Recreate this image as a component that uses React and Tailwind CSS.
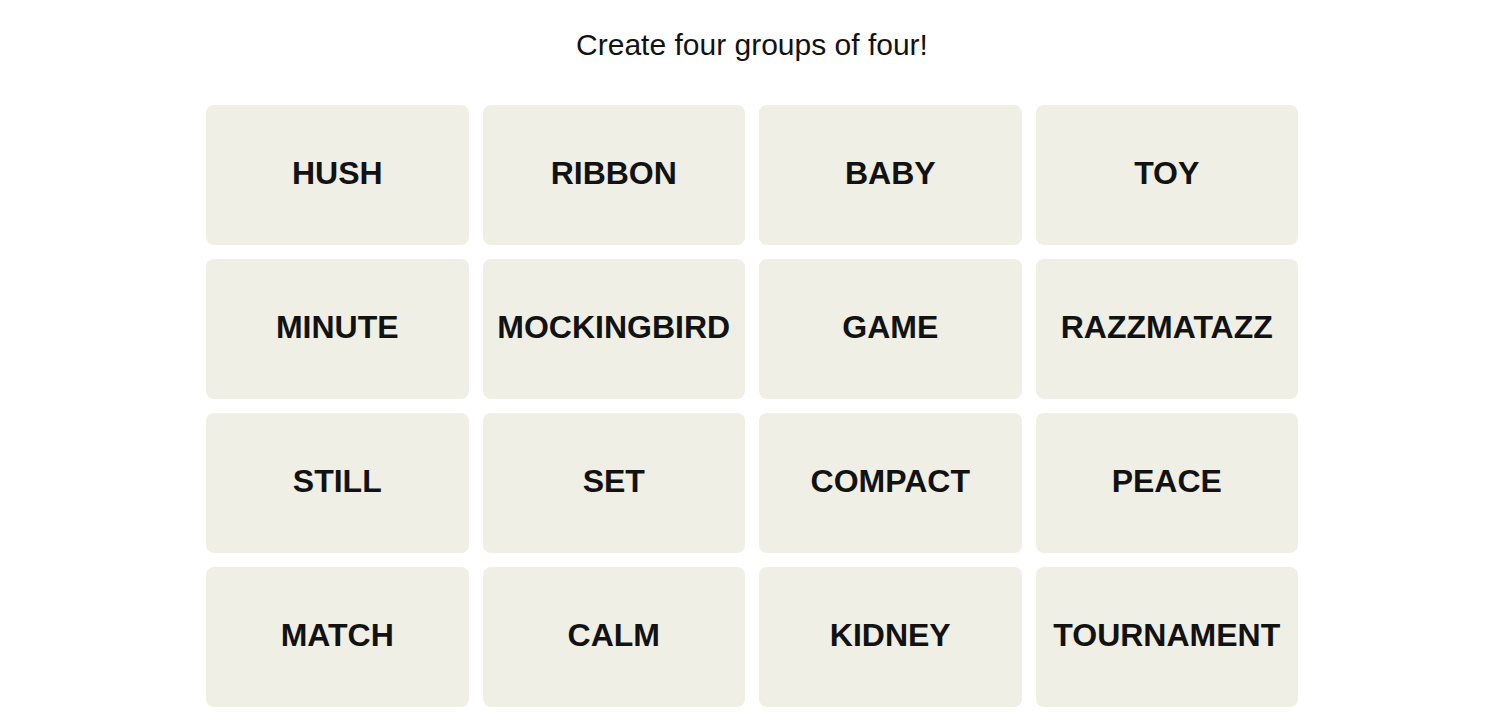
export default function App() {
  const words = [
    "HUSH", "RIBBON", "BABY", "TOY",
    "MINUTE", "MOCKINGBIRD", "GAME", "RAZZMATAZZ",
    "STILL", "SET", "COMPACT", "PEACE",
    "MATCH", "CALM", "KIDNEY", "TOURNAMENT",
  ];
  return (
    <div className="min-h-screen bg-white flex flex-col items-center pl-[4px] pt-[27px]" style={{ fontFamily: '"Liberation Sans", Arial, sans-serif' }}>
      <h1 className="text-[30px] leading-[36px] font-normal text-[#121212]">Create four groups of four!</h1>
      <div className="mt-[42px] w-[1092px] grid grid-cols-4 gap-x-[14px] gap-y-[14px]">
        {words.map((w) => (
          <button
            key={w}
            className="h-[140px] rounded-[8px] bg-[#efefe6] flex items-center justify-center pb-[4px] text-[32px] font-bold text-[#121212] uppercase"
          >
            {w}
          </button>
        ))}
      </div>
    </div>
  );
}
